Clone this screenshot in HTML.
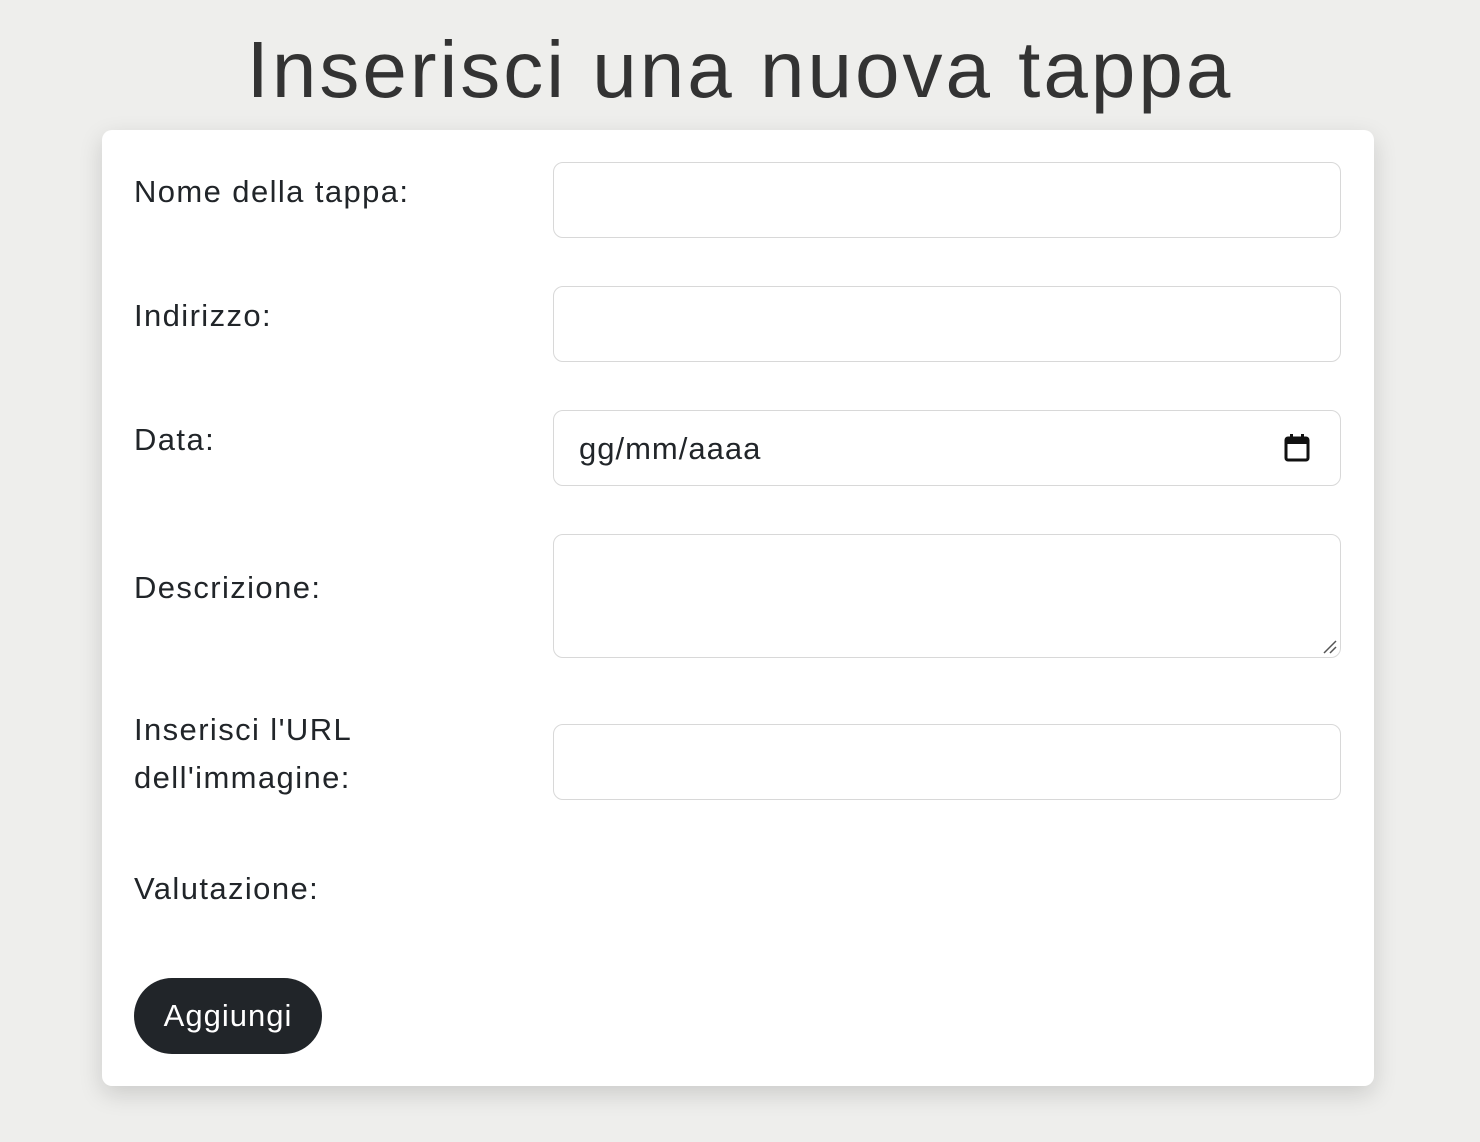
<!DOCTYPE html>
<html><head><meta charset="utf-8"><style>
body{margin:0;width:1480px;height:1142px;background:#eeeeec;font-family:"Liberation Sans",sans-serif;color:#212529;position:relative;overflow:hidden}
h1{position:absolute;left:0;width:1480px;top:22px;margin:0;text-align:center;font-weight:400;font-size:80px;line-height:96px;color:#333;letter-spacing:3px}
.card{position:absolute;left:102px;top:130px;width:1272px;height:956px;background:#fff;border-radius:10px;box-shadow:0 8px 24px rgba(0,0,0,.15)}
.l{position:absolute;left:134px;font-size:31px;line-height:48px;color:#212529;letter-spacing:1.4px}
.i{position:absolute;left:553px;width:786px;height:74px;border:1px solid #d8d8d8;border-radius:10px;background:#fff}
.btn{position:absolute;left:134px;top:978px;width:188px;height:76px;border-radius:38px;background:#212529;color:#fff;font-size:31px;line-height:76px;text-align:center;letter-spacing:1px}
</style></head><body>
<h1>Inserisci una nuova tappa</h1>
<div class="card"></div>
<div class="l" style="top:168px">Nome della tappa:</div>
<div class="i" style="top:162px"></div>
<div class="l" style="top:292px">Indirizzo:</div>
<div class="i" style="top:286px"></div>
<div class="l" style="top:416px">Data:</div>
<div class="i" style="top:410px"><span style="position:absolute;left:25px;top:14px;font-size:31px;line-height:48px;letter-spacing:1px">gg/mm/aaaa</span>
<svg style="position:absolute;left:729px;top:22px" width="28" height="30" viewBox="0 0 28 30"><rect x="3" y="5" width="22" height="22" rx="2" fill="none" stroke="#111" stroke-width="3"/><rect x="3" y="5" width="22" height="6" fill="#111"/><rect x="7" y="1" width="3" height="6" fill="#111"/><rect x="18" y="1" width="3" height="6" fill="#111"/></svg></div>
<div class="l" style="top:564px">Descrizione:</div>
<div class="i" style="top:534px;height:122px"><svg style="position:absolute;right:2px;bottom:2px" width="16" height="16"><path d="M2 14L14 2M8 14L14 8" stroke="#555" stroke-width="1.5"/></svg></div>
<div class="l" style="top:706px">Inserisci l'URL<br>dell'immagine:</div>
<div class="i" style="top:724px"></div>
<div class="l" style="top:865px">Valutazione:</div>
<div class="btn">Aggiungi</div>
</body></html>
